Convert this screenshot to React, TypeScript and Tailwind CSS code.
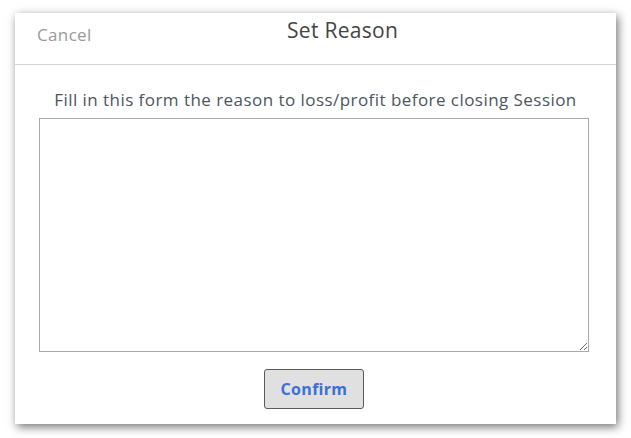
import React from 'react';

const App: React.FC = () => {
  return (
    <div
      className="w-[631px] h-[438px] bg-white pt-[13px] pl-[15px]"
      style={{ fontFamily: '"Open Sans", "Noto Sans", sans-serif' }}
    >
      <div className="w-[601px] h-[411px] bg-white flex flex-col shadow-[2px_3px_9px_rgba(0,0,0,0.55)]">
        {/* header */}
        <div className="h-[52px] flex items-start border-b border-[#d4d4d4]">
          <div className="w-[272px] pl-[22px] pt-[10px]">
            <span className="text-[17px] leading-[24px] tracking-[0.35px] text-[#9a9a9a] cursor-pointer">Cancel</span>
          </div>
          <div className="pt-[3px] text-[21px] leading-[28px] tracking-[0.3px] text-[#444444]">Set Reason</div>
        </div>

        <div className="flex flex-col items-center pt-[23px]">
          <p className="text-[17px] leading-[24px] tracking-[0.45px] text-[#4d5560]">
            Fill in this form the reason to loss/profit before closing Session
          </p>
          <textarea className="mt-[6px] ml-[-3px] w-[550px] h-[234px] border border-[#a9a9a9] bg-white outline-none resize" />
          <button className="mt-[17px] ml-[-3px] w-[100px] h-[40px] rounded-[3px] border border-[#5a5a5a] bg-[#e0e0e0] text-[16px] font-bold tracking-[0.3px] text-[#3b6fd9]">
            Confirm
          </button>
        </div>
      </div>
    </div>
  );
};

export default App;
